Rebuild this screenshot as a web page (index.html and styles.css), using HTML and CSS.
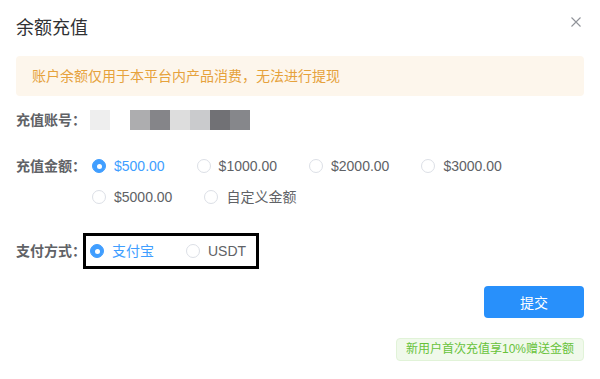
FILE: index.html
```html
<!DOCTYPE html>
<html lang="zh-CN">

<head>
    <meta charset="UTF-8">
    <meta name="viewport" content="width=device-width, initial-scale=1.0">
    <title>余额充值</title>
    <link rel="stylesheet" href="styles.css">
</head>

<body>
    <div class="dialog">
        <div class="dialog-header">
            <span class="dialog-title">余额充值</span>
            <span class="dialog-close">
                <svg width="10" height="10" viewBox="0 0 10 10">
                    <path d="M0.5 0.5L9.5 9.5M9.5 0.5L0.5 9.5" stroke="#909399" stroke-width="1.1" fill="none" />
                </svg>
            </span>
        </div>

        <div class="alert">账户余额仅用于本平台内产品消费，无法进行提现</div>

        <div class="form-row account-row">
            <label class="form-label">充值账号：</label>
            <div class="mosaic">
                <i class="c1"></i><i class="c2"></i><i class="c3"></i><i class="c4"></i>
                <i class="c5"></i><i class="c6"></i><i class="c7"></i><i class="c8"></i>
            </div>
        </div>

        <div class="form-row amount-row">
            <label class="form-label">充值金额：</label>
            <div class="radio-group">
                <span class="radio checked"><span class="radio-dot"></span>$500.00</span>
                <span class="radio"><span class="radio-dot"></span>$1000.00</span>
                <span class="radio"><span class="radio-dot"></span>$2000.00</span>
                <span class="radio"><span class="radio-dot"></span>$3000.00</span>
                <span class="radio"><span class="radio-dot"></span>$5000.00</span>
                <span class="radio"><span class="radio-dot"></span>自定义金额</span>
            </div>
        </div>

        <div class="form-row pay-row">
            <label class="form-label short">支付方式：</label>
            <div class="pay-box">
                <span class="radio checked"><span class="radio-dot"></span>支付宝</span>
                <span class="radio last"><span class="radio-dot"></span>USDT</span>
            </div>
        </div>

        <div class="footer">
            <button class="btn-submit">提交</button>
        </div>

        <div class="footer">
            <span class="tag">新用户首次充值享10%赠送金额</span>
        </div>
    </div>
</body>

</html>
```

FILE: styles.css
```css
* {
    margin: 0;
    padding: 0;
    box-sizing: border-box;
}

body {
    background: #fdfdfd;
    font-family: "Liberation Sans", Arial, "Noto Sans CJK SC", sans-serif;
    font-size: 14px;
    color: #606266;
}

.dialog {
    width: 600px;
    height: 379px;
    background: #fff;
    padding: 0 16px;
}

.dialog-header {
    height: 56px;
    display: flex;
    justify-content: space-between;
    align-items: flex-start;
}

.dialog-title {
    font-size: 18px;
    line-height: 24px;
    margin-top: 16px;
    color: #303133;
}

.dialog-close {
    display: flex;
    margin-top: 17px;
    margin-right: 3px;
}

.alert {
    height: 40px;
    line-height: 40px;
    padding: 0 16px;
    background: #fdf6ec;
    border-radius: 4px;
    color: #e6a23c;
}

.form-row {
    display: flex;
    align-items: flex-start;
}

.form-label {
    width: 76px;
    flex-shrink: 0;
    font-weight: bold;
    line-height: 20px;
    color: #606266;
    white-space: nowrap;
}

.form-label.short {
    width: 67px;
    margin-top: 8px;
}

.account-row {
    margin-top: 14px;
}

.mosaic {
    display: flex;
    margin-left: -2px;
}

.mosaic i {
    width: 20px;
    height: 20px;
}

.mosaic .c1 { background: #eeeeee; }
.mosaic .c2 { background: #ffffff; }
.mosaic .c3 { background: #adadaf; }
.mosaic .c4 { background: #858589; }
.mosaic .c5 { background: #dddddd; }
.mosaic .c6 { background: #cacbcd; }
.mosaic .c7 { background: #717175; }
.mosaic .c8 { background: #86878b; }

.amount-row {
    margin-top: 26px;
}

.radio-group {
    flex: 1;
    display: flex;
    flex-wrap: wrap;
    row-gap: 11px;
}

.radio {
    display: inline-flex;
    align-items: center;
    line-height: 20px;
    margin-right: 32px;
    color: #606266;
    white-space: nowrap;
}

.radio-dot {
    width: 14px;
    height: 14px;
    border: 1px solid #dcdfe6;
    border-radius: 50%;
    margin-right: 8px;
    background: #fff;
}

.radio.checked {
    color: #409eff;
}

.radio.checked .radio-dot {
    border-color: #409eff;
    background: #409eff;
    display: flex;
    align-items: center;
    justify-content: center;
}

.radio.checked .radio-dot::after {
    content: "";
    width: 5px;
    height: 5px;
    border-radius: 50%;
    background: #fff;
}

.radio.last {
    margin-right: 0;
}

.pay-row {
    margin-top: 26px;
}

.pay-box {
    display: flex;
    border: 3px solid #000;
    padding: 5px 10px 5px 4px;
}

.footer {
    display: flex;
    justify-content: flex-end;
}

.btn-submit {
    margin-top: 17px;
    width: 100px;
    height: 32px;
    border: none;
    border-radius: 4px;
    background: #2890fb;
    color: #fff;
    font-family: inherit;
    font-size: 14px;
}

.tag {
    margin-top: 20px;
    height: 23px;
    line-height: 21px;
    padding: 0 9px;
    font-size: 12px;
    color: #67c23a;
    background: #f0f9eb;
    border: 1px solid #e1f3d8;
    border-radius: 4px;
}
```
